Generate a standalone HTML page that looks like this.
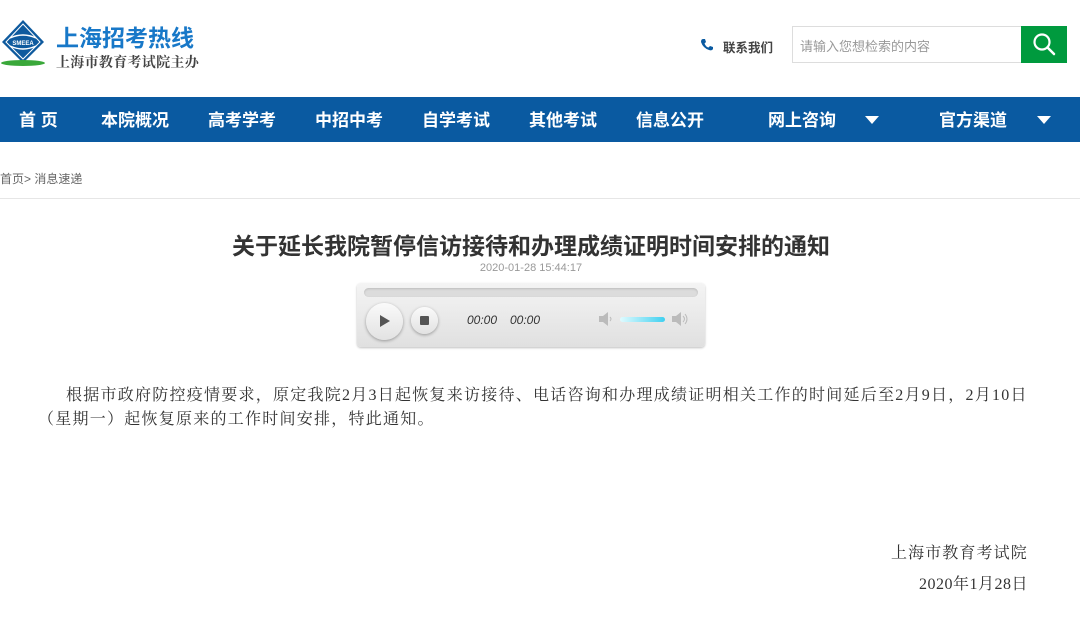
<!DOCTYPE html>
<html><head><meta charset="utf-8"><style>
*{margin:0;padding:0;box-sizing:border-box}
body{width:1080px;height:621px;overflow:hidden;background:#fff;font-family:"Liberation Sans","Noto Sans CJK SC",sans-serif;position:relative}
.abs{position:absolute}
.nav{position:absolute;left:0;top:97px;width:1080px;height:45px;background:#0a5aa1}
.nav span{position:absolute;top:1px;line-height:45px;color:#fff;font-weight:bold;font-size:17px}
.tri{position:absolute;top:19px;width:0;height:0;border-left:7px solid transparent;border-right:7px solid transparent;border-top:8px solid #fff}
.body{position:absolute;left:38px;top:384px;width:1000px;font-family:"Liberation Serif","Noto Serif CJK SC",serif;font-size:16px;line-height:24px;color:#333;text-indent:28px;letter-spacing:1.25px}
</style></head><body>
<svg class="abs" style="left:0;top:18px" width="48" height="50" viewBox="0 0 48 50">
<polygon points="23,2 44,24 23,45 2,24" fill="#0e5a9e"/>
<polygon points="23,6 40,24 23,41 6,24" fill="none" stroke="#fff" stroke-width="1"/>
<path d="M10,20 Q23,14 36,20 M10,28 Q23,34 36,28" stroke="#fff" stroke-width="1.5" fill="none"/>
<text x="23" y="27" font-size="6" fill="#fff" text-anchor="middle" font-weight="bold" font-family="Liberation Sans">SMEEA</text>
<ellipse cx="23" cy="45" rx="22" ry="3" fill="#3aa83a"/>
</svg>
<div class="abs" style="left:56px;top:19px;font-size:23px;font-weight:bold;color:#1878c8">上海招考热线</div>
<div class="abs" style="left:56px;top:52px;font-size:14px;color:#444;font-family:'Liberation Serif','Noto Serif CJK SC',serif;font-weight:bold;letter-spacing:0.3px">上海市教育考试院主办</div>
<svg class="abs" style="left:701px;top:39px" width="12" height="12" viewBox="0 0 12 12"><path d="M2,0 L4,0 L5,3 L3.5,4.5 Q5,8 7.5,8.5 L9,7 L12,8 L12,10 Q11,12 8,11 Q2,9 0,3 Q0,0 2,0Z" fill="#0a5aa1"/></svg>
<div class="abs" style="left:723px;top:37px;font-size:12.5px;font-weight:bold;color:#444">联系我们</div>
<div class="abs" style="left:792px;top:26px;width:231px;height:37px;border:1px solid #ddd"></div>
<div class="abs" style="left:800px;top:36px;font-size:13px;color:#999">请输入您想检索的内容</div>
<div class="abs" style="left:1021px;top:26px;width:46px;height:37px;background:#009a3e"></div>
<svg class="abs" style="left:1032px;top:32px" width="25" height="25" viewBox="0 0 25 25"><circle cx="10" cy="10" r="7.5" stroke="#fff" stroke-width="2.2" fill="none"/><line x1="15.5" y1="15.5" x2="22" y2="22" stroke="#fff" stroke-width="2.5" stroke-linecap="round"/></svg>
<div class="nav">
<span style="left:19px">首 页</span>
<span style="left:101px">本院概况</span>
<span style="left:208px">高考学考</span>
<span style="left:315px">中招中考</span>
<span style="left:422px">自学考试</span>
<span style="left:529px">其他考试</span>
<span style="left:636px">信息公开</span>
<span style="left:768px">网上咨询</span>
<div class="tri" style="left:865px"></div>
<span style="left:939px">官方渠道</span>
<div class="tri" style="left:1037px"></div>
</div>
<div class="abs" style="left:0;top:170px;font-size:12px;color:#666">首页&gt; 消息速递</div>
<div class="abs" style="left:0;top:198px;width:1080px;height:1px;background:#e6e6e6"></div>
<div class="abs" style="left:0;top:227px;width:1062px;text-align:center;font-size:23px;font-weight:bold;color:#333">关于延长我院暂停信访接待和办理成绩证明时间安排的通知</div>
<div class="abs" style="left:0;top:262px;width:1062px;text-align:center;font-size:11px;color:#999">2020-01-28 15:44:17</div>
<div class="abs" style="left:357px;top:283px;width:348px;height:64px;border-radius:4px;background:linear-gradient(#f4f4f4,#e0e0e0);box-shadow:0 1px 2px rgba(0,0,0,.25)"></div>
<div class="abs" style="left:364px;top:288px;width:334px;height:9px;border-radius:5px;background:#dcdcdc;box-shadow:inset 0 1px 2px rgba(0,0,0,.15)"></div>
<div class="abs" style="left:366px;top:303px;width:37px;height:37px;border-radius:50%;background:linear-gradient(#fafafa,#e2e2e2);box-shadow:0 1px 3px rgba(0,0,0,.35)"></div>
<div class="abs" style="left:380px;top:315px;width:0;height:0;border-top:6px solid transparent;border-bottom:6px solid transparent;border-left:10px solid #555"></div>
<div class="abs" style="left:411px;top:307px;width:27px;height:27px;border-radius:50%;background:linear-gradient(#fafafa,#e2e2e2);box-shadow:0 1px 3px rgba(0,0,0,.35)"></div>
<div class="abs" style="left:420px;top:316px;width:9px;height:9px;background:#555;border-radius:1px"></div>
<div class="abs" style="left:467px;top:313px;font-size:12px;font-style:italic;color:#333">00:00</div>
<div class="abs" style="left:510px;top:313px;font-size:12px;font-style:italic;color:#333">00:00</div>
<svg class="abs" style="left:599px;top:312px" width="16" height="14" viewBox="0 0 16 14"><path d="M0,4 H4 L9,0 V14 L4,10 H0Z" fill="#bbb"/><path d="M11,5 Q13,7 11,9" stroke="#bbb" fill="none"/></svg>
<div class="abs" style="left:620px;top:317px;width:45px;height:5px;border-radius:3px;background:linear-gradient(90deg,#e0fbff,#3fd0f0);"></div>
<svg class="abs" style="left:672px;top:312px" width="18" height="14" viewBox="0 0 18 14"><path d="M0,4 H4 L9,0 V14 L4,10 H0Z" fill="#bbb"/><path d="M11,4 Q14,7 11,10 M13,2 Q17,7 13,12" stroke="#bbb" fill="none"/></svg>
<div class="body">根据市政府防控疫情要求，原定我院2月3日起恢复来访接待、电话咨询和办理成绩证明相关工作的时间延后至2月9日，2月10日<br>（星期一）起恢复原来的工作时间安排，特此通知。</div>
<div class="abs" style="left:891px;top:540px;font-family:'Liberation Serif','Noto Serif CJK SC',serif;font-size:16px;color:#333;letter-spacing:1.1px">上海市教育考试院</div>
<div class="abs" style="left:919px;top:571px;font-family:'Liberation Serif','Noto Serif CJK SC',serif;font-size:16px;color:#333;letter-spacing:0.5px">2020年1月28日</div>
</body></html>
